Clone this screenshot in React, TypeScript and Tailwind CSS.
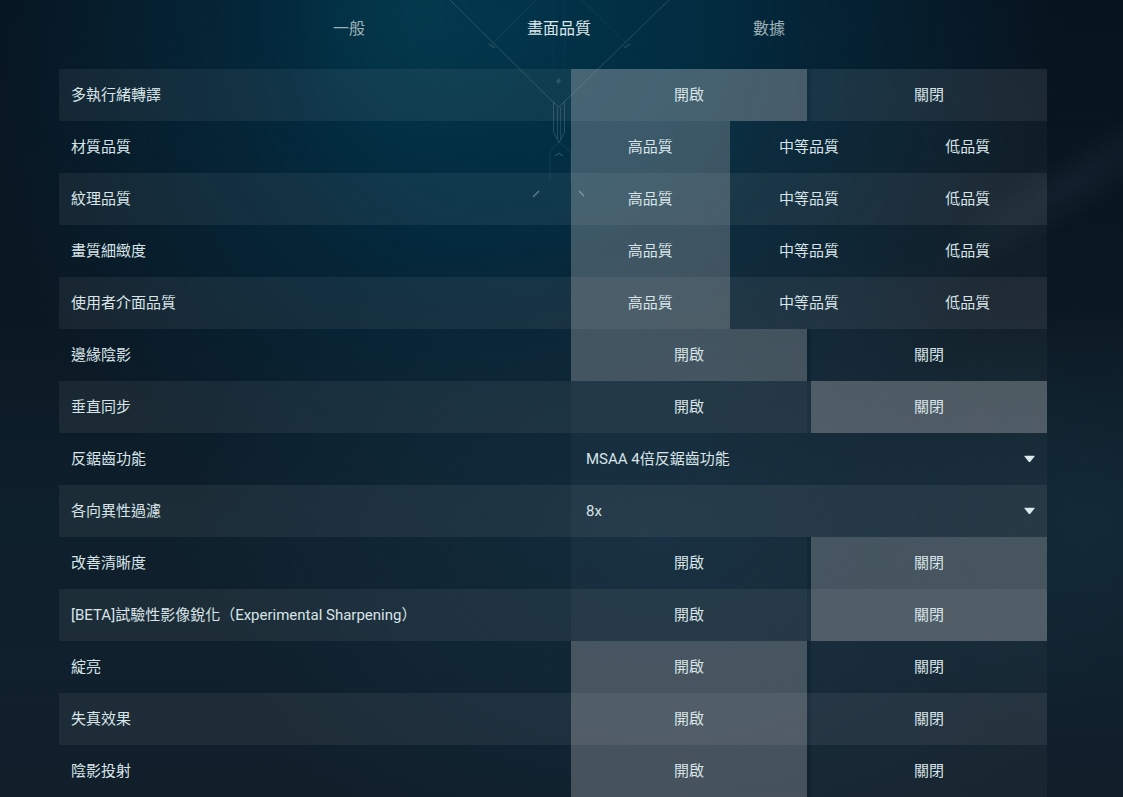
import { useState } from 'react';
import clsx from 'clsx';

interface Setting {
  id: string;
  label: string;
  options: string[];
  value: string;
  kind?: 'select';
}

const TABS = ['一般', '畫面品質', '數據'];
const ON_OFF = ['開啟', '關閉'];
const QUALITY = ['高品質', '中等品質', '低品質'];

const SETTINGS: Setting[] = [
  { id: 'multithread', label: '多執行緒轉譯', options: ON_OFF, value: '開啟' },
  { id: 'material', label: '材質品質', options: QUALITY, value: '高品質' },
  { id: 'texture', label: '紋理品質', options: QUALITY, value: '高品質' },
  { id: 'detail', label: '畫質細緻度', options: QUALITY, value: '高品質' },
  { id: 'ui', label: '使用者介面品質', options: QUALITY, value: '高品質' },
  { id: 'vignette', label: '邊緣陰影', options: ON_OFF, value: '開啟' },
  { id: 'vsync', label: '垂直同步', options: ON_OFF, value: '關閉' },
  { id: 'antialiasing', label: '反鋸齒功能', options: ['MSAA 4倍反鋸齒功能'], value: 'MSAA 4倍反鋸齒功能', kind: 'select' },
  { id: 'anisotropic', label: '各向異性過濾', options: ['8x'], value: '8x', kind: 'select' },
  { id: 'clarity', label: '改善清晰度', options: ON_OFF, value: '關閉' },
  { id: 'sharpening', label: '[BETA]試驗性影像銳化（Experimental Sharpening）', options: ON_OFF, value: '關閉' },
  { id: 'bloom', label: '綻亮', options: ON_OFF, value: '開啟' },
  { id: 'distortion', label: '失真效果', options: ON_OFF, value: '開啟' },
  { id: 'shadows', label: '陰影投射', options: ON_OFF, value: '開啟' },
];

function Backdrop() {
  return (
    <svg
      className="absolute inset-0 -z-10 h-full w-full"
      viewBox="0 0 1123 797"
      preserveAspectRatio="xMidYMin slice"
      fill="none"
      aria-hidden="true"
    >
      <defs>
        <linearGradient id="base" x1="0" y1="0" x2="0" y2="1">
          <stop offset="0" stopColor="#07131e" />
          <stop offset="0.4" stopColor="#0b1823" />
          <stop offset="0.65" stopColor="#0e202c" />
          <stop offset="1" stopColor="#111f2b" />
        </linearGradient>
        <radialGradient id="glow" gradientUnits="userSpaceOnUse" cx="0" cy="0" r="1" gradientTransform="translate(510 20) scale(560 560)">
          <stop offset="0" stopColor="#02344a" />
          <stop offset="0.35" stopColor="#022d42" stopOpacity="0.95" />
          <stop offset="0.65" stopColor="#04283b" stopOpacity="0.6" />
          <stop offset="1" stopColor="#082538" stopOpacity="0" />
        </radialGradient>
        <radialGradient id="core" gradientUnits="userSpaceOnUse" cx="0" cy="0" r="1" gradientTransform="translate(420 10) scale(130 150)">
          <stop offset="0" stopColor="#053b4e" stopOpacity="0.8" />
          <stop offset="1" stopColor="#053b4e" stopOpacity="0" />
        </radialGradient>
        <radialGradient id="haze" gradientUnits="userSpaceOnUse" cx="0" cy="0" r="1" gradientTransform="translate(660 540) scale(480 340)">
          <stop offset="0" stopColor="#122c3d" stopOpacity="0.9" />
          <stop offset="0.5" stopColor="#122a3a" stopOpacity="0.6" />
          <stop offset="1" stopColor="#122a38" stopOpacity="0" />
        </radialGradient>
        <radialGradient id="edge" gradientUnits="userSpaceOnUse" cx="0" cy="0" r="1" gradientTransform="translate(1090 520) scale(240 220)">
          <stop offset="0" stopColor="#142b38" stopOpacity="0.8" />
          <stop offset="1" stopColor="#142b38" stopOpacity="0" />
        </radialGradient>
        <radialGradient id="streak">
          <stop offset="0" stopColor="#2c4656" stopOpacity="0.2" />
          <stop offset="1" stopColor="#2c4656" stopOpacity="0" />
        </radialGradient>
      </defs>
      <rect width="1123" height="797" fill="url(#base)" />
      <rect width="1123" height="797" fill="url(#glow)" />
      <rect width="1123" height="797" fill="url(#core)" />
      <rect width="1123" height="797" fill="url(#haze)" />
      <rect width="1123" height="797" fill="url(#edge)" />
      <ellipse rx="190" ry="34" fill="url(#streak)" transform="translate(1070 185) rotate(-32)" />

      {/* Crest */}
      <g stroke="#7fa0ac">
        <path d="M450 0 553 102M669 0 564 102" strokeOpacity="0.28" />
        <path d="M536 0 493 43M582 0 626 43" strokeOpacity="0.12" />
        <path d="M489 44l6 4M624 48l6-4" strokeWidth="2" strokeOpacity="0.2" />
        <path d="M553.5 102v30l5.500 11 5.500-11v-30M553 102l6 5 5-5" strokeOpacity="0.3" />
        <path d="M557.500 107v32M560.500 107v32" strokeOpacity="0.25" />
        <path d="M553.500 0v70M564.500 0v70" strokeOpacity="0.05" />
        <path d="M558 143c-6 6-8 9-8 14v24M560 143c8 6 11 9 11 14v24" strokeOpacity="0.12" />
        <path d="M555 156l4-3 4 3" strokeOpacity="0.4" />
        <path d="M533 197l6-6M579 191l5 5" strokeWidth="1.500" strokeOpacity="0.6" />
      </g>
      <path d="M558.500 78l2.500 3-2.500 3-2.500-3z" fill="#7fa0ac" fillOpacity="0.25" />
    </svg>
  );
}

interface ControlProps {
  setting: Setting;
  value: string;
  onChange: (value: string) => void;
}

function SegmentedControl({ setting, value, onChange }: ControlProps) {
  return (
    <div
      role="group"
      aria-labelledby={setting.id + '-label'}
      className={clsx('grid h-full', setting.options.length === 2 ? 'grid-cols-2 gap-1' : 'grid-cols-3')}
    >
      {setting.options.map(option => (
        <button
          key={option}
          type="button"
          aria-pressed={option === value}
          onClick={() => onChange(option)}
          className={clsx('text-center', option === value ? 'bg-[#e2dedb]/26' : 'bg-white/3 hover:bg-white/10')}
        >
          {option}
        </button>
      ))}
    </div>
  );
}

function SelectControl({ setting, value, onChange }: ControlProps) {
  return (
    <div className="relative h-full bg-white/3">
      <select
        id={setting.id}
        value={value}
        onChange={e => onChange(e.target.value)}
        className="h-full w-full appearance-none bg-transparent px-[15px] outline-none"
      >
        {setting.options.map(option => (
          <option key={option} className="bg-[#1b2f3d]">{option}</option>
        ))}
      </select>
      <svg className="pointer-events-none absolute top-1/2 right-3 h-[7px] w-[11px] -translate-y-1/2" viewBox="0 0 11 7" aria-hidden="true">
        <path d="M1 0h9q1.200 0 .5 1L6.300 6.300q-.8.800-1.600 0L.5 1Q-.2 0 1 0z" fill="#dbe8ec" />
      </svg>
    </div>
  );
}

export default function App() {
  const [activeTab, setActiveTab] = useState('畫面品質');
  const [values, setValues] = useState<Record<string, string>>(
    Object.fromEntries(SETTINGS.map(s => [s.id, s.value]))
  );

  return (
    <div className="relative isolate min-h-screen overflow-hidden bg-[#0b1a27] pr-[76px] pl-[59px] font-[Roboto,'Noto_Sans_CJK_TC',sans-serif] text-[15px] text-[#d8e4e8]">
      <Backdrop />

      <nav className="flex h-[69px] justify-center pb-3 pl-3 text-base">
        {TABS.map(tab => (
          <button
            key={tab}
            type="button"
            aria-current={tab === activeTab ? 'page' : undefined}
            onClick={() => setActiveTab(tab)}
            className={clsx('w-[210px]', tab === activeTab ? 'text-[#dbe5e8]' : 'text-[#9fb1b7] hover:text-white')}
          >
            {tab}
          </button>
        ))}
      </nav>

      <main>
        {SETTINGS.map(setting => {
          const Control = setting.kind === 'select' ? SelectControl : SegmentedControl;
          return (
            <div key={setting.id} className="grid h-[52px] grid-cols-[512fr_476fr] odd:bg-white/6">
              {setting.kind === 'select' ? (
                <label htmlFor={setting.id} className="flex items-center px-3">{setting.label}</label>
              ) : (
                <span id={setting.id + '-label'} className="flex items-center px-3">{setting.label}</span>
              )}
              <Control
                setting={setting}
                value={values[setting.id]}
                onChange={value => setValues({ ...values, [setting.id]: value })}
              />
            </div>
          );
        })}
      </main>
    </div>
  );
}
